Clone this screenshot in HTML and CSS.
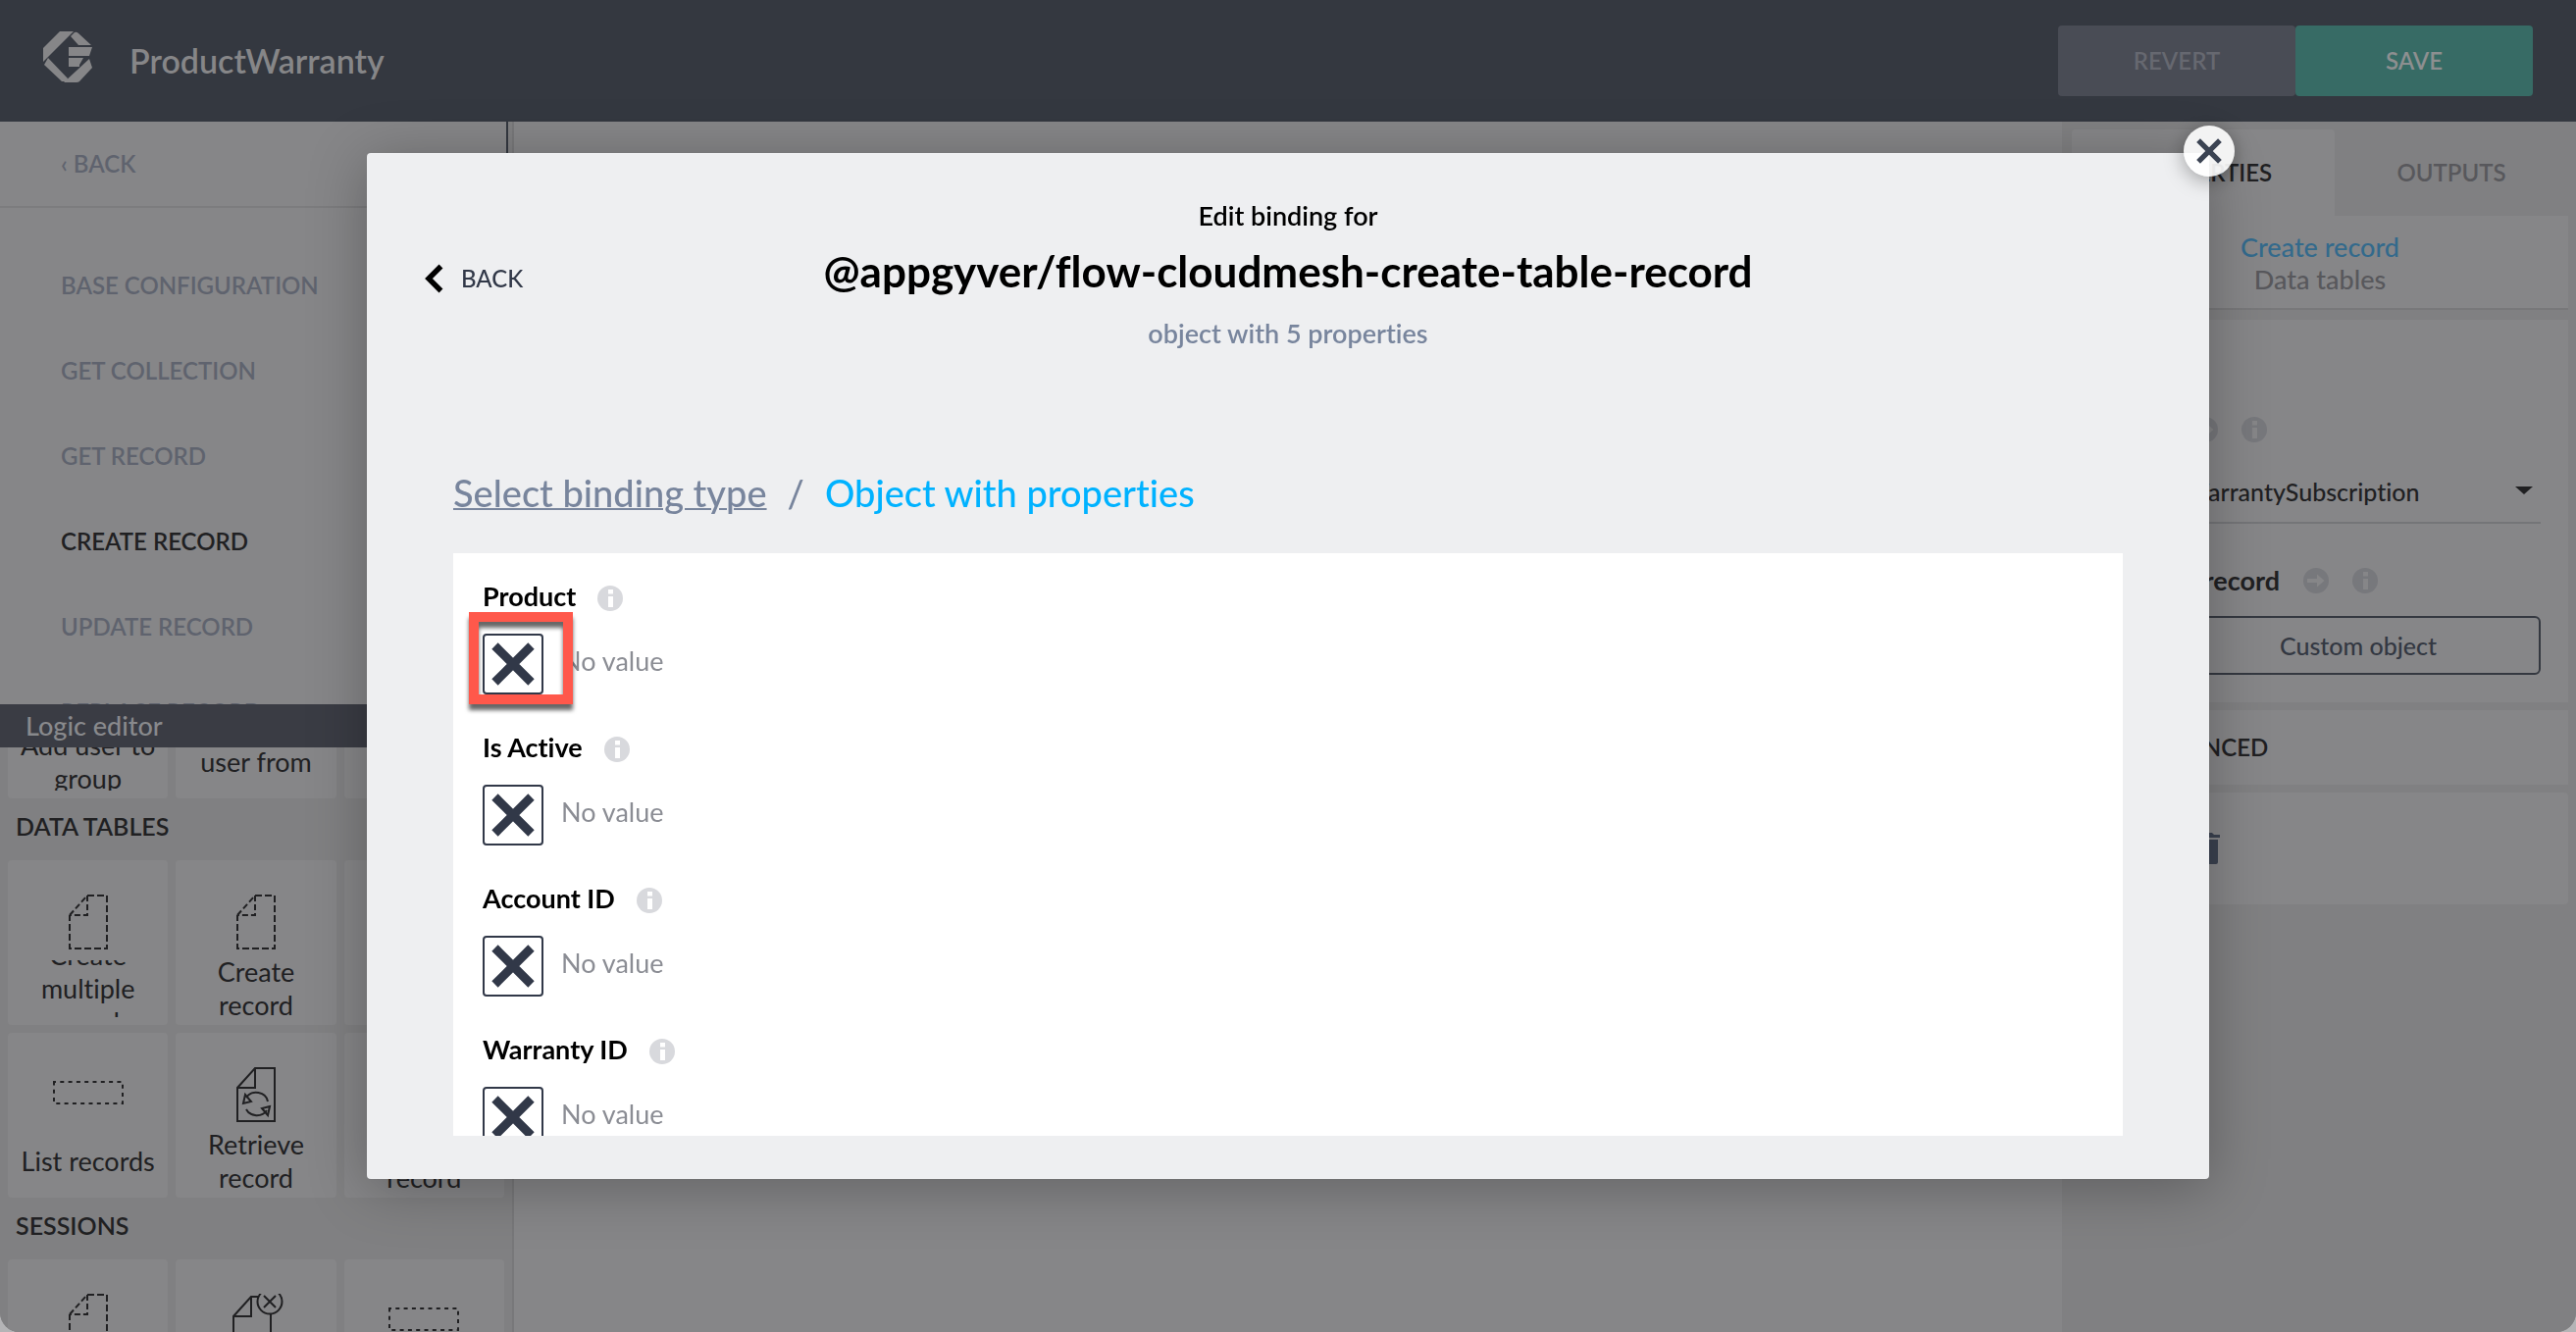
FILE: index.html
```html
<!DOCTYPE html>
<html lang="en">
<head>
<meta charset="utf-8">
<title>ProductWarranty</title>
<link rel="stylesheet" href="styles.css">
</head>
<body>
<svg class="defs" aria-hidden="true">
  <symbol id="i-info" viewBox="0 0 26 26"><circle cx="13" cy="13" r="13" fill="currentColor"/><path class="cut" d="M11 4h5v4.500h-5zM11 11h5v11h-5z"/></symbol>
  <symbol id="i-arrow" viewBox="0 0 26 26"><circle cx="13" cy="13" r="13" fill="currentColor"/><path class="cut" d="M4 11h10V6.500l7.500 6.500-7.500 6.500V15H4z"/></symbol>
  <symbol id="i-x" viewBox="0 0 44 44"><path d="M3.500 3.500l37 37M40.500 3.500l-37 37" fill="none" stroke="currentColor" stroke-width="9"/></symbol>
  <symbol id="i-doc" viewBox="0 0 72 56"><g fill="none" stroke="currentColor" stroke-width="2"><path d="M35 1h20v54H17V21" stroke-dasharray="7 3"/><path d="M17 21L35 1v20H17" stroke-dasharray="6 3"/></g></symbol>
  <symbol id="i-list" viewBox="0 0 72 56"><rect x="1" y="15" width="70" height="22" fill="none" stroke="currentColor" stroke-width="2" stroke-dasharray="4 4.300" stroke-dashoffset="2"/></symbol>
  <symbol id="i-retrieve" viewBox="0 0 72 56"><g fill="none" stroke="currentColor" stroke-width="2"><path d="M35 1h20v54H17V21zM35 1v20H17"/><path d="M26 31a12 11 0 0 1 22 4M26 43a12 11 0 0 0 21 1"/><path d="M25 28l-2 9 8-2zM50 40l-8 2 6 7z"/></g></symbol>
  <symbol id="i-remove" viewBox="0 0 72 56"><g fill="none" stroke="currentColor" stroke-width="2"><path d="M38 3h-7L13 23v34M31 3v20H13M51 21v40"/><circle cx="50" cy="8" r="12.500"/><path d="M44 2l12 12M56 2L44 14"/></g></symbol>
</svg>

<div class="app">
  <header class="topbar">
    <svg class="logo" viewBox="0 0 50 52" aria-hidden="true"><path d="M17 0h14L0 31V17zM5 27L25 48l-2 3h-4L1 34zM28 5l4-4q2-1 4 1l13 12H36zM26 16h24l-3 9H26zM26 27h15l-4 7v2H26zM47 28l3 9-13 14q-1 1-3 1H21z"/></svg>
    <h1 class="app-name">ProductWarranty</h1>
    <div class="actions">
      <button class="action revert">REVERT</button>
      <button class="action save">SAVE</button>
    </div>
  </header>

  <div class="workspace">
    <aside class="left">
      <nav class="nav">
        <a class="nav-back" href="#">‹ BACK</a>
        <ul class="nav-list">
          <li><a href="#">BASE CONFIGURATION</a></li>
          <li><a href="#">GET COLLECTION</a></li>
          <li><a href="#">GET RECORD</a></li>
          <li><a class="current" href="#">CREATE RECORD</a></li>
          <li><a href="#">UPDATE RECORD</a></li>
          <li><a href="#">REPLACE RECORD</a></li>
        </ul>
      </nav>
      <section class="logic">
        <h2 class="logic-title">Logic editor</h2>
        <div class="palette">
          <div class="palette-scroll">
            <div class="tiles">
              <div class="tile"><svg class="tile-icon"><use href="#i-doc"/></svg><p class="tile-label"><span>Add user to group</span></p></div>
              <div class="tile"><svg class="tile-icon"><use href="#i-remove"/></svg><p class="tile-label"><span>Remove<br>user from<br>group</span></p></div>
              <div class="tile"><svg class="tile-icon"><use href="#i-list"/></svg><p class="tile-label"><span>List group members</span></p></div>
            </div>
            <h3 class="group">DATA TABLES</h3>
            <div class="tiles">
              <div class="tile"><svg class="tile-icon"><use href="#i-doc"/></svg><p class="tile-label"><span>Create<br>multiple<br>records</span></p></div>
              <div class="tile"><svg class="tile-icon"><use href="#i-doc"/></svg><p class="tile-label"><span>Create<br>record</span></p></div>
              <div class="tile"><svg class="tile-icon"><use href="#i-remove"/></svg><p class="tile-label"><span>Delete<br>record</span></p></div>
              <div class="tile"><svg class="tile-icon"><use href="#i-list"/></svg><p class="tile-label"><span>List records</span></p></div>
              <div class="tile"><svg class="tile-icon"><use href="#i-retrieve"/></svg><p class="tile-label"><span>Retrieve<br>record</span></p></div>
              <div class="tile"><svg class="tile-icon"><use href="#i-doc"/></svg><p class="tile-label"><span>Update<br>record</span></p></div>
            </div>
            <h3 class="group">SESSIONS</h3>
            <div class="tiles">
              <div class="tile"><svg class="tile-icon"><use href="#i-doc"/></svg></div>
              <div class="tile"><svg class="tile-icon"><use href="#i-remove"/></svg></div>
              <div class="tile"><svg class="tile-icon"><use href="#i-list"/></svg></div>
            </div>
          </div>
        </div>
      </section>
    </aside>

    <main class="canvas"></main>

    <aside class="right">
      <div class="tabs" role="tablist">
        <button class="tab active" role="tab" aria-selected="true">PROPERTIES</button>
        <button class="tab" role="tab" aria-selected="false">OUTPUTS</button>
      </div>
      <div class="card summary">
        <a href="#">Create record</a>
        <p>Data tables</p>
      </div>
      <div class="card inputs">
        <div class="prop-head"><label for="source">Entity</label><svg class="badge"><use href="#i-arrow"/></svg><svg class="badge"><use href="#i-info"/></svg></div>
        <div class="picker">
          <select id="source"><option>ProductWarrantySubscription</option></select>
          <svg class="caret" viewBox="0 0 18 8" aria-hidden="true"><path d="M0 0h18L9 8z" fill="currentColor"/></svg>
        </div>
        <div class="prop-head second"><span>Create a record</span><svg class="badge"><use href="#i-arrow"/></svg><svg class="badge"><use href="#i-info"/></svg></div>
        <div class="binding"><button class="binding-type" aria-label="Binding type"></button><button class="custom">Custom object</button></div>
      </div>
      <div class="card advanced">ADVANCED</div>
      <div class="card remove"><button class="trash">Delete
        <svg viewBox="0 0 22 32" width="22" height="32" aria-hidden="true"><path d="M0 2h6l2-2h6l2 2h6v3H0zM2 7h18v23q0 2-2 2H4q-2 0-2-2z" fill="currentColor"/></svg></button></div>
    </aside>
  </div>
</div>

<div class="overlay">
  <div class="modal" role="dialog" aria-modal="true" aria-labelledby="modal-title">
    <button class="close" aria-label="Close"><svg><use href="#i-x"/></svg></button>
    <header class="modal-head">
      <button class="back"><svg viewBox="0 0 20 30" aria-hidden="true"><path d="M17.500 2.500L5 15l12.500 12.500" fill="none" stroke="#000" stroke-width="5.500"/></svg>BACK</button>
      <div class="headline">
        <p class="eyebrow">Edit binding for</p>
        <h2 id="modal-title">@appgyver/flow-cloudmesh-create-table-record</h2>
        <p class="kind">object with 5 properties</p>
      </div>
    </header>
    <nav class="crumbs"><a href="#">Select binding type</a><span>/</span><strong>Object with properties</strong></nav>
    <div class="fields">
      <div class="field">
        <h3>Product<svg class="badge"><use href="#i-info"/></svg></h3>
        <div class="value"><button aria-label="Set Product"><svg><use href="#i-x"/></svg></button><span>No value</span><div class="marker"></div></div>
      </div>
      <div class="field">
        <h3>Is Active<svg class="badge"><use href="#i-info"/></svg></h3>
        <div class="value"><button aria-label="Set Is Active"><svg><use href="#i-x"/></svg></button><span>No value</span></div>
      </div>
      <div class="field">
        <h3>Account ID<svg class="badge"><use href="#i-info"/></svg></h3>
        <div class="value"><button aria-label="Set Account ID"><svg><use href="#i-x"/></svg></button><span>No value</span></div>
      </div>
      <div class="field">
        <h3>Warranty ID<svg class="badge"><use href="#i-info"/></svg></h3>
        <div class="value"><button aria-label="Set Warranty ID"><svg><use href="#i-x"/></svg></button><span>No value</span></div>
      </div>
    </div>
  </div>
</div>
</body>
</html>
```

FILE: styles.css
```css
:root {
  --surface: #868688;
  --ground: #808082;
  --dark: #343840;
  --ink: #202022;
  --navy: #313848;
  --slate: #78859d;
}
* { box-sizing: border-box; }
body {
  margin: 0;
  overflow: hidden;
  background: #b4b4b6;
  color: var(--ink);
  font: 600 24px/34px Lato, "Open Sans", sans-serif;
  font-variant-ligatures: none;
}
h1, h2, h3, p, ul { margin: 0; padding: 0; font-size: inherit; font-weight: inherit; }
ul { list-style: none; }
a { color: inherit; text-decoration: none; }
button, select { margin: 0; padding: 0; border: 0; background: none; color: inherit; font: inherit; }
svg { display: block; flex: none; }
.defs { position: absolute; width: 0; height: 0; }

.app {
  display: flex;
  flex-direction: column;
  height: 100vh;
  overflow: hidden;
  background: var(--surface);
  border-radius: 0 0 20px 20px;
}
.topbar {
  display: flex;
  flex: none;
  align-items: center;
  height: 124px;
  padding: 0 44px;
  background: var(--dark);
  color: #868688;
}
.logo { width: 50px; height: 52px; margin-bottom: 8px; fill: currentColor; }
.app-name { margin-left: 38px; font-size: 34px; line-height: 40px; }
.actions { display: flex; margin-left: auto; }
.action { width: 242px; height: 72px; border-radius: 4px; }
.revert { background: #494c55; color: #666870; }
.save { background: #376b65; color: #8d8f90; }

.workspace { display: flex; flex: 1; min-height: 0; }
.left {
  display: grid;
  flex: none;
  grid-template-rows: 594fr 640fr;
  width: 524px;
  background: var(--ground);
  border-right: 2px solid #78787a;
}
.nav {
  width: 518px;
  overflow: hidden;
  background: var(--surface);
  border-right: 2px solid var(--dark);
  color: #5f636e;
}
.nav-back { display: block; padding-left: 62px; border-bottom: 2px solid #7c7c7e; line-height: 86px; }
.nav-list { padding: 35px 62px 0; line-height: 87px; }
.current { color: var(--ink); }
.logic { display: flex; flex-direction: column; min-height: 0; }
.logic-title { flex: none; padding-left: 26px; background: #3a3c44; color: #88898c; font-size: 27px; font-weight: 500; line-height: 44px; }
.palette { flex: 1; min-height: 0; overflow: hidden; padding: 0 8px; }
/* the list is scrolled part of the way down */
.palette-scroll { margin-top: -116px; }
.tiles { display: grid; grid-template-columns: repeat(3, 1fr); gap: 8px; }
.tile {
  display: flex;
  flex-direction: column;
  align-items: center;
  height: 168px;
  padding-top: 35px;
  background: var(--surface);
  border-radius: 4px;
}
.tile-icon { width: 72px; height: 56px; margin-bottom: 11px; overflow: visible; }
.tile-label { display: flex; align-items: center; height: 58px; padding: 0 10px; overflow: hidden; text-align: center; font-size: 27px; font-weight: 400; }
.group { padding: 0 8px; margin-bottom: 6px; font-size: 25px; line-height: 57px; }
.canvas { flex: 1; }

.right { flex: none; width: 524px; padding: 8px 8px 0 10px; background: var(--ground); }
.tabs { display: flex; }
.tab { flex: 1; height: 88px; color: #58585c; }
.tab.active { flex: none; width: 268px; border-radius: 4px 4px 0 0; background: var(--surface); color: var(--ink); }
.card { margin-bottom: 8px; padding: 0 28px; background: var(--surface); }
.summary { margin-bottom: 10px; padding: 15px 28px 13px; border-bottom: 2px solid #78787a; color: #58585c; text-align: center; font-size: 27px; font-weight: 500; line-height: 33px; }
.summary a { color: #336a8c; }
.inputs { padding: 87px 28px 28px; }
.badge { width: 26px; height: 26px; color: #77787c; }
.cut { fill: var(--surface); }
.prop-head { display: flex; align-items: center; height: 50px; gap: 24px; font-size: 27px; font-weight: 700; }
.prop-head.second { margin: 33px 0 11px; }
.picker { position: relative; height: 65px; margin-top: 6px; border-bottom: 2px solid #747578; }
.picker select { width: 100%; height: 63px; appearance: none; font-size: 25px; font-weight: 500; }
.caret { position: absolute; top: 27px; right: 8px; width: 18px; height: 8px; pointer-events: none; }
.binding { display: flex; gap: 22px; }
.binding button { height: 60px; border: 2px solid var(--dark); border-radius: 6px; }
.binding-type { width: 56px; }
.custom { flex: 1; color: #333842; font-size: 25px; font-weight: 500; }
.advanced { padding-left: 68px; line-height: 76px; }
.remove { height: 114px; border-radius: 4px; }
.trash { display: flex; align-items: center; gap: 30px; height: 114px; color: #3b4250; }

.overlay { position: fixed; inset: 0; display: grid; padding: 156px 374px; }
.modal {
  position: relative;
  display: flex;
  flex-direction: column;
  min-height: 0;
  padding: 42px 0 44px;
  border-radius: 4px;
  background: #eeeff1;
  box-shadow: 0 8px 60px rgba(0, 0, 0, .28);
  color: #000;
}
.close {
  position: absolute;
  top: -28px;
  right: -26px;
  display: grid;
  place-items: center;
  width: 52px;
  height: 52px;
  border-radius: 50%;
  background: rgba(255, 255, 255, .9);
  box-shadow: 0 4px 20px rgba(0, 0, 0, .35);
  color: #3b4352;
}
.close svg { width: 26px; height: 26px; }
.modal-head { display: grid; grid-template-columns: 1fr auto 1fr; align-items: center; padding: 0 58px; }
.back { display: flex; align-items: center; justify-self: start; gap: 18px; color: var(--navy); font-weight: 500; }
.back svg { width: 20px; height: 30px; }
.headline { text-align: center; }
.eyebrow { font-size: 27px; line-height: 44px; }
.headline h2 { font-size: 44px; line-height: 68px; font-weight: 700; }
.kind { color: var(--slate); font-size: 27px; line-height: 60px; }
.crumbs { display: flex; gap: 21px; margin: 108px 88px 38px; color: var(--slate); font-size: 38px; font-weight: 500; line-height: 48px; }
.crumbs a { text-decoration: underline; text-decoration-thickness: 2px; }
.crumbs strong { color: #00b2ff; font-weight: inherit; }
.fields { flex: 1; min-height: 0; margin: 0 88px; padding: 26px 30px 0; overflow: hidden; background: #fff; }
.field { margin-bottom: 36px; }
.field h3 { display: flex; align-items: center; gap: 22px; margin-bottom: 20px; font-size: 27px; line-height: 36px; font-weight: 700; }
.field .badge { margin-top: 4px; color: #d8d9dd; --surface: #fff; }
.value { position: relative; display: flex; align-items: center; gap: 18px; height: 62px; color: #8b8d94; font-size: 27px; font-weight: 400; }
.value span { margin-bottom: 6px; }
.value button { display: grid; place-items: center; width: 62px; height: 62px; border: 2px solid var(--navy); border-radius: 4px; color: var(--navy); }
.value button svg { width: 44px; height: 44px; }
.marker {
  position: absolute;
  top: -22px;
  left: -14px;
  width: 106px;
  height: 94px;
  border: 10px solid #ff584b;
  filter: drop-shadow(0 6px 2px rgba(0, 0, 0, .6));
}
```
